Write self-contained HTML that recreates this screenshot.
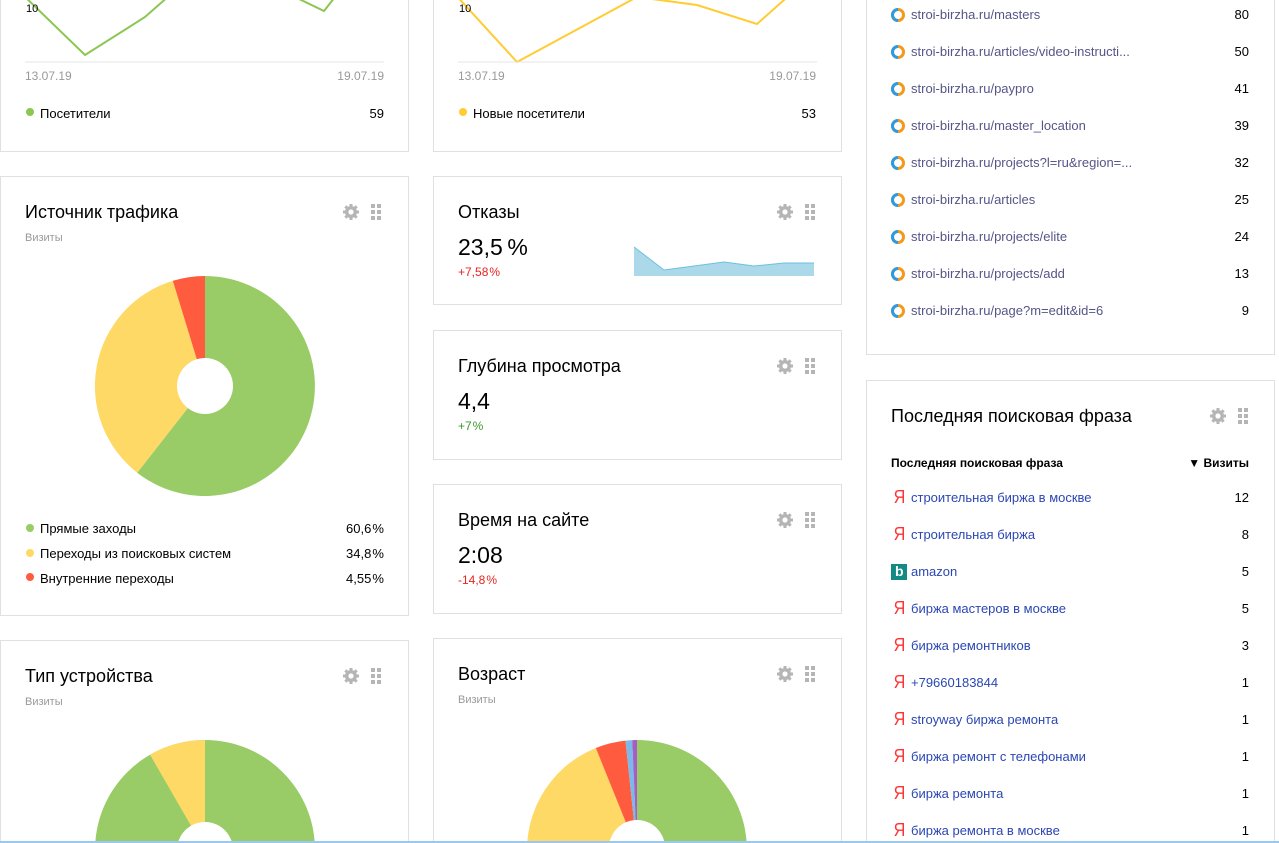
<!DOCTYPE html>
<html><head><meta charset="utf-8"><style>
*{margin:0;padding:0;box-sizing:border-box}
html,body{width:1279px;height:843px;overflow:hidden}
body{background:#fff;font-family:"Liberation Sans","DejaVu Sans",sans-serif;color:#000}
#root{position:relative;width:1279px;height:843px;overflow:hidden}
.card{position:absolute;border:1px solid #e0e0e0;background:#fff}
.a{position:absolute;white-space:nowrap}
.t{font-size:18px}
.s{font-size:11px;color:#999}
.d{font-size:12px;color:#999}
.n{font-size:13px}
.dot{position:absolute;width:8px;height:8px;border-radius:50%}
.lk{font-size:13px;color:#555588}
.sq{font-size:13px;color:#2b47b3}
.ic{position:absolute}
.y{position:absolute;font-size:18px;color:#f33;transform:scaleX(0.9)}
.r1{right:895px}.r2{right:463px}.r3{right:30px}
</style></head><body><div id="root">
<svg width="0" height="0" style="position:absolute"><defs>
<g id="gear"><g fill="#b5b5b5"><circle cx="9" cy="9" r="6"/>
<rect x="7.5" y="1" width="3" height="16"/><rect x="1" y="7.5" width="16" height="3"/>
<rect x="7.5" y="1" width="3" height="16" transform="rotate(45 9 9)"/><rect x="7.5" y="1" width="3" height="16" transform="rotate(-45 9 9)"/></g><circle cx="9" cy="9" r="2.6" fill="#fff"/></g>
<g id="grid" fill="#b5b5b5"><rect x="0" y="0" width="4" height="4"/><rect x="6" y="0" width="4" height="4"/><rect x="0" y="6" width="4" height="4"/><rect x="6" y="6" width="4" height="4"/><rect x="0" y="12" width="4" height="4"/><rect x="6" y="12" width="4" height="4"/></g>
<g id="ym"><circle cx="7" cy="7" r="5.5" fill="none" stroke="#f39a1d" stroke-width="3"/><path d="M7 1.5 A5.5 5.5 0 0 0 7 12.5" fill="none" stroke="#2d9be0" stroke-width="3"/></g>
</defs></svg>

<!-- column 1 -->
<div class="card" style="left:0;top:-10px;width:409px;height:162px"></div>
<svg class="ic" style="left:0;top:0" width="409" height="70"><polyline points="20,-8 85,55 145,17 170,-5" fill="none" stroke="#8cc652" stroke-width="2"/><polyline points="295,-3 324,11 335,-3" fill="none" stroke="#8cc652" stroke-width="2"/><line x1="25" y1="62" x2="384" y2="62" stroke="#e6e6e6"/></svg>
<div class="a" style="left:26px;top:3px;font-size:11px">10</div>
<div class="a d" style="left:25px;top:69px">13.07.19</div>
<div class="a d r1" style="top:69px">19.07.19</div>
<div class="dot" style="left:26px;top:108px;background:#8cc652"></div>
<div class="a n" style="left:40px;top:106px">Посетители</div>
<div class="a n r1" style="top:106px">59</div>

<div class="card" style="left:0;top:176px;width:409px;height:440px"></div>
<div class="a t" style="left:25px;top:202px">Источник трафика</div>
<div class="a s" style="left:25px;top:232px">Визиты</div>
<svg class="ic" style="left:342px;top:203px" width="40" height="18"><use href="#gear"/><use href="#grid" x="29" y="1"/></svg>
<svg class="ic" style="left:0;top:0" width="409" height="843">
<path d="M205 386 L205 276 A110 110 0 1 1 137.2 472.7 Z" fill="#99cc66"/>
<path d="M205 386 L137.2 472.7 A110 110 0 0 1 172.8 280.8 Z" fill="#ffd966"/>
<path d="M205 386 L172.8 280.8 A110 110 0 0 1 205 276 Z" fill="#ff5c3f"/>
<circle cx="205" cy="386" r="28" fill="#fff"/>
</svg>
<div class="dot" style="left:26px;top:524px;background:#99cc66"></div>
<div class="dot" style="left:26px;top:549px;background:#ffd966"></div>
<div class="dot" style="left:26px;top:573px;background:#ff5c3f"></div>
<div class="a n" style="left:40px;top:521px">Прямые заходы</div>
<div class="a n" style="left:40px;top:546px">Переходы из поисковых систем</div>
<div class="a n" style="left:40px;top:571px">Внутренние переходы</div>
<div class="a n r1" style="top:521px">60,6&#8202;%</div>
<div class="a n r1" style="top:546px">34,8&#8202;%</div>
<div class="a n r1" style="top:571px">4,55&#8202;%</div>

<div class="card" style="left:0;top:640px;width:409px;height:220px"></div>
<div class="a t" style="left:25px;top:666px">Тип устройства</div>
<div class="a s" style="left:25px;top:696px">Визиты</div>
<svg class="ic" style="left:342px;top:667px" width="40" height="18"><use href="#gear"/><use href="#grid" x="29" y="1"/></svg>
<svg class="ic" style="left:0;top:700px" width="409" height="143">
<g transform="translate(0,-700)">
<circle cx="205" cy="850" r="110" fill="#99cc66"/>
<path d="M205 850 L150 754.7 A110 110 0 0 1 205 740 Z" fill="#ffd966"/>
<circle cx="205" cy="850" r="28" fill="#fff"/></g></svg>

<!-- column 2 -->
<div class="card" style="left:433px;top:-10px;width:409px;height:162px"></div>
<svg class="ic" style="left:433px;top:0" width="409" height="70"><polyline points="20,-8 84,62 204,-3 264,5 324,24 360,-8" fill="none" stroke="#ffcc33" stroke-width="2"/><line x1="25" y1="62" x2="384" y2="62" stroke="#e6e6e6"/></svg>
<div class="a" style="left:459px;top:3px;font-size:11px">10</div>
<div class="a d" style="left:458px;top:69px">13.07.19</div>
<div class="a d r2" style="top:69px">19.07.19</div>
<div class="dot" style="left:459px;top:108px;background:#ffcc33"></div>
<div class="a n" style="left:473px;top:106px">Новые посетители</div>
<div class="a n r2" style="top:106px">53</div>

<div class="card" style="left:433px;top:176px;width:409px;height:129px"></div>
<div class="a t" style="left:458px;top:202px">Отказы</div>
<svg class="ic" style="left:776px;top:203px" width="40" height="18"><use href="#gear"/><use href="#grid" x="29" y="1"/></svg>
<div class="a" style="left:458px;top:234px;font-size:23px">23,5&#8201;%</div>
<div class="a" style="left:458px;top:265px;font-size:12px;color:#e8241e">+7,58&#8202;%</div>
<svg class="ic" style="left:0;top:0" width="843" height="843"><path d="M634 247 L664 270 694 266 724 262 754 266 784 263 814 263 L814 276 L634 276Z" fill="#acd9ea"/><polyline points="634,247 664,270 694,266 724,262 754,266 784,263 814,263" fill="none" stroke="#6cc0e0"/>
<path d="M634 417 L664 411 694 398 724 405 754 403 784 405 814 398 L814 430 L634 430Z" fill="#acd9ea"/><polyline points="634,417 664,411 694,398 724,405 754,403 784,405 814,398" fill="none" stroke="#6cc0e0"/>
<path d="M634 582 L664 568 694 557 724 574 754 572 784 563 814 567 L814 583 L634 583Z" fill="#acd9ea"/><polyline points="634,582 664,568 694,557 724,574 754,572 784,563 814,567" fill="none" stroke="#6cc0e0"/></svg>

<div class="card" style="left:433px;top:330px;width:409px;height:130px"></div>
<div class="a t" style="left:458px;top:356px">Глубина просмотра</div>
<svg class="ic" style="left:776px;top:357px" width="40" height="18"><use href="#gear"/><use href="#grid" x="29" y="1"/></svg>
<div class="a" style="left:458px;top:388px;font-size:23px">4,4</div>
<div class="a" style="left:458px;top:419px;font-size:12px;color:#3a9a2a">+7&#8202;%</div>

<div class="card" style="left:433px;top:484px;width:409px;height:130px"></div>
<div class="a t" style="left:458px;top:510px">Время на сайте</div>
<svg class="ic" style="left:776px;top:511px" width="40" height="18"><use href="#gear"/><use href="#grid" x="29" y="1"/></svg>
<div class="a" style="left:458px;top:542px;font-size:23px">2:08</div>
<div class="a" style="left:458px;top:573px;font-size:12px;color:#e8241e">-14,8&#8202;%</div>

<div class="card" style="left:433px;top:638px;width:409px;height:220px"></div>
<div class="a t" style="left:458px;top:664px">Возраст</div>
<div class="a s" style="left:458px;top:694px">Визиты</div>
<svg class="ic" style="left:776px;top:665px" width="40" height="18"><use href="#gear"/><use href="#grid" x="29" y="1"/></svg>
<svg class="ic" style="left:433px;top:700px" width="409" height="143"><g transform="translate(-433,-700)">
<path d="M637 850 L637 740 A110 110 0 0 1 637 960 Z" fill="#99cc66"/>
<path d="M637 850 L637 960 A110 110 0 0 1 595.8 748 Z" fill="#ffd966"/>
<path d="M637 850 L595.8 748 A110 110 0 0 1 625.5 740.6 Z" fill="#ff5c3f"/>
<path d="M637 850 L625.5 740.6 A110 110 0 0 1 632.2 740.1 Z" fill="#7cb9e8"/>
<path d="M637 850 L632.2 740.1 A110 110 0 0 1 637 740 Z" fill="#a55ec4"/>
<circle cx="637" cy="848" r="28" fill="#fff"/></g></svg>

<!-- column 3 -->
<div class="card" style="left:866px;top:-10px;width:409px;height:365px"></div>
<div class="card" style="left:866px;top:380px;width:409px;height:480px"></div>
<div class="a t" style="left:891px;top:406px">Последняя поисковая фраза</div>
<svg class="ic" style="left:1209px;top:407px" width="40" height="18"><use href="#gear"/><use href="#grid" x="29" y="1"/></svg>
<div class="a" style="left:891px;top:456px;font-size:12px;font-weight:bold">Последняя поисковая фраза</div>
<div class="a r3" style="top:456px;font-size:12px;font-weight:bold">▼ Визиты</div>

<svg class="ic" style="left:891px;top:8px" width="14" height="14"><use href="#ym"/></svg><div class="a lk" style="left:911px;top:7px">stroi-birzha.ru/masters</div><div class="a n r3" style="top:7px">80</div>
<svg class="ic" style="left:891px;top:45px" width="14" height="14"><use href="#ym"/></svg><div class="a lk" style="left:911px;top:44px">stroi-birzha.ru/articles/video-instructi...</div><div class="a n r3" style="top:44px">50</div>
<svg class="ic" style="left:891px;top:82px" width="14" height="14"><use href="#ym"/></svg><div class="a lk" style="left:911px;top:81px">stroi-birzha.ru/paypro</div><div class="a n r3" style="top:81px">41</div>
<svg class="ic" style="left:891px;top:119px" width="14" height="14"><use href="#ym"/></svg><div class="a lk" style="left:911px;top:118px">stroi-birzha.ru/master_location</div><div class="a n r3" style="top:118px">39</div>
<svg class="ic" style="left:891px;top:156px" width="14" height="14"><use href="#ym"/></svg><div class="a lk" style="left:911px;top:155px">stroi-birzha.ru/projects?l=ru&amp;region=...</div><div class="a n r3" style="top:155px">32</div>
<svg class="ic" style="left:891px;top:193px" width="14" height="14"><use href="#ym"/></svg><div class="a lk" style="left:911px;top:192px">stroi-birzha.ru/articles</div><div class="a n r3" style="top:192px">25</div>
<svg class="ic" style="left:891px;top:230px" width="14" height="14"><use href="#ym"/></svg><div class="a lk" style="left:911px;top:229px">stroi-birzha.ru/projects/elite</div><div class="a n r3" style="top:229px">24</div>
<svg class="ic" style="left:891px;top:267px" width="14" height="14"><use href="#ym"/></svg><div class="a lk" style="left:911px;top:266px">stroi-birzha.ru/projects/add</div><div class="a n r3" style="top:266px">13</div>
<svg class="ic" style="left:891px;top:304px" width="14" height="14"><use href="#ym"/></svg><div class="a lk" style="left:911px;top:303px">stroi-birzha.ru/page?m=edit&amp;id=6</div><div class="a n r3" style="top:303px">9</div>

<div class="y" style="left:893px;top:487px">Я</div><div class="a sq" style="left:911px;top:490px">строительная биржа в москве</div><div class="a n r3" style="top:490px">12</div>
<div class="y" style="left:893px;top:524px">Я</div><div class="a sq" style="left:911px;top:527px">строительная биржа</div><div class="a n r3" style="top:527px">8</div>
<div class="a" style="left:891px;top:564px;width:16px;height:16px;background:#138a84"><span style="position:absolute;left:4px;top:-1px;color:#fff;font-size:14px;font-weight:bold">b</span></div><div class="a sq" style="left:911px;top:564px">amazon</div><div class="a n r3" style="top:564px">5</div>
<div class="y" style="left:893px;top:598px">Я</div><div class="a sq" style="left:911px;top:601px">биржа мастеров в москве</div><div class="a n r3" style="top:601px">5</div>
<div class="y" style="left:893px;top:635px">Я</div><div class="a sq" style="left:911px;top:638px">биржа ремонтников</div><div class="a n r3" style="top:638px">3</div>
<div class="y" style="left:893px;top:672px">Я</div><div class="a sq" style="left:911px;top:675px">+79660183844</div><div class="a n r3" style="top:675px">1</div>
<div class="y" style="left:893px;top:709px">Я</div><div class="a sq" style="left:911px;top:712px">stroyway биржа ремонта</div><div class="a n r3" style="top:712px">1</div>
<div class="y" style="left:893px;top:746px">Я</div><div class="a sq" style="left:911px;top:749px">биржа ремонт с телефонами</div><div class="a n r3" style="top:749px">1</div>
<div class="y" style="left:893px;top:783px">Я</div><div class="a sq" style="left:911px;top:786px">биржа ремонта</div><div class="a n r3" style="top:786px">1</div>
<div class="y" style="left:893px;top:820px">Я</div><div class="a sq" style="left:911px;top:823px">биржа ремонта в москве</div><div class="a n r3" style="top:823px">1</div>

<div style="position:absolute;left:0;top:841px;width:1279px;height:2px;background:#9cc8ec"></div>
</div></body></html>
